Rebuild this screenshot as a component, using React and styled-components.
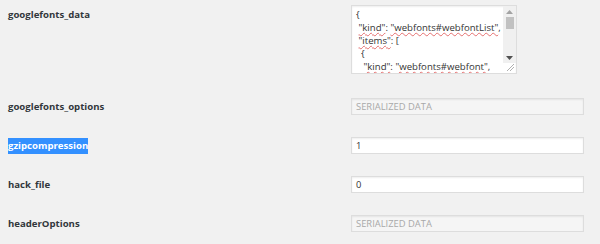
import React from "react";
import styled, { createGlobalStyle } from "styled-components";

const Global = createGlobalStyle`
  html, body { margin: 0; padding: 0; background: #f1f1f1; }
  body { font-family: "Open Sans", "Noto Sans", sans-serif; color: #23282d; }
`;

const Table = styled.div`
  width: 600px;
  height: 244px;
  overflow: hidden;
  display: flex;
  flex-direction: column;
`;

const Row = styled.div`
  display: grid;
  grid-template-columns: 351px 233px;
  padding: ${(p) => p.$pad || "11px 0 11px 0"};
`;

const Label = styled.div`
  padding-left: 8px;
  font-size: 9.6px;
  font-weight: 700;
  line-height: 17px;
  color: #32373c;
  padding-top: ${(p) => p.$top || "0"};
`;

const Selected = styled.span`
  background: #3390ff;
  color: #fff;
  padding: 1px 0 2px;
`;

const TextBox = styled.div`
  box-sizing: border-box;
  width: 166px;
  height: 69px;
  background: #fff;
  border: 1px solid #dddddd;
  box-shadow: inset 0 1px 2px rgba(0, 0, 0, 0.07);
  display: flex;
  position: relative;
`;

const Code = styled.div`
  flex: 1;
  overflow: hidden;
  white-space: pre;
  font-size: 9.6px;
  line-height: 13px;
  color: #333;
  padding: 2px 0 0 4px;
`;

const Sq = styled.span`
  text-decoration: underline wavy rgba(220, 60, 60, 0.7);
  text-decoration-thickness: 1px;
  text-underline-offset: 1px;
`;

const ScrollBar = styled.div`
  width: 13px;
  height: 57px;
  background: #f0f0f0;
  display: flex;
  flex-direction: column;
  align-items: center;
`;

const Arrow = styled.div`
  height: 11px;
  display: flex;
  align-items: center;
  justify-content: center;
`;

const Thumb = styled.div`
  width: 8px;
  height: 12px;
  background: #c1c1c1;
`;

const Track = styled.div`
  flex: 1;
`;

const Grip = styled.svg`
  position: absolute;
  right: 1px;
  bottom: 1px;
`;

const Input = styled.div`
  box-sizing: border-box;
  height: 17px;
  width: 233px;
  border: 1px solid #dddddd;
  box-shadow: inset 0 1px 2px rgba(0, 0, 0, 0.07);
  background: ${(p) => (p.$disabled ? "#f5f5f5" : "#fff")};
  color: ${(p) => (p.$disabled ? "#a8a8a8" : "#333")};
  font-size: 9.4px;
  line-height: 15px;
  padding-left: 4px;
`;

export default function App() {
  return (
    <>
      <Global />
      <Table>
        <Row $pad="5px 0 13px 0">
          <Label $top="1px">googlefonts_data</Label>
          <TextBox>
            <Code>
              {"{\n "}
              <Sq>"kind"</Sq>
              {": "}
              <Sq>"webfonts#webfontList"</Sq>
              {",\n "}
              <Sq>"items"</Sq>
              {": [\n  {\n   "}
              <Sq>"kind"</Sq>
              {": "}
              <Sq>"webfonts#webfont"</Sq>
              {",\n"}
            </Code>
            <ScrollBar>
              <Arrow>
                <svg width="7" height="4" viewBox="0 0 7 4">
                  <path d="M0 4 L3.5 0 L7 4 Z" fill="#a3a3a3" />
                </svg>
              </Arrow>
              <Thumb />
              <Track />
              <Arrow>
                <svg width="7" height="4" viewBox="0 0 7 4">
                  <path d="M0 0 L7 0 L3.5 4 Z" fill="#505050" />
                </svg>
              </Arrow>
            </ScrollBar>
            <Grip width="9" height="9" viewBox="0 0 9 9">
              <path d="M1 8 L8 1 M4 8 L8 4" stroke="#b0b0b0" strokeWidth="1" />
            </Grip>
          </TextBox>
        </Row>
        <Row>
          <Label>googlefonts_options</Label>
          <Input $disabled>SERIALIZED DATA</Input>
        </Row>
        <Row>
          <Label>
            <Selected>gzipcompression</Selected>
          </Label>
          <Input>1</Input>
        </Row>
        <Row>
          <Label>hack_file</Label>
          <Input>0</Input>
        </Row>
        <Row>
          <Label>headerOptions</Label>
          <Input $disabled>SERIALIZED DATA</Input>
        </Row>
      </Table>
    </>
  );
}
